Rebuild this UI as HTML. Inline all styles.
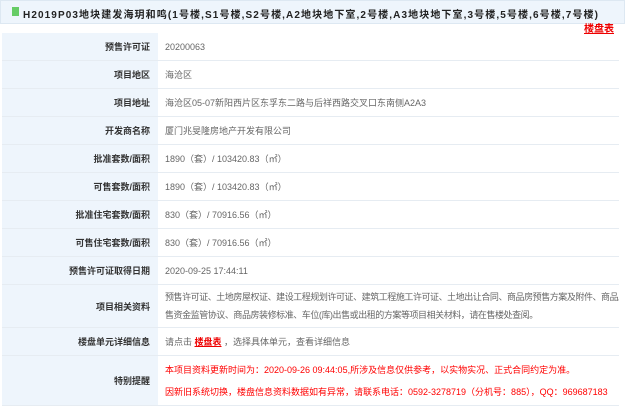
<!DOCTYPE html>
<html><head><meta charset="utf-8"><style>
body{margin:0;width:625px;height:406px;overflow:hidden;background:#fff;font-family:"Liberation Sans","Noto Sans CJK SC",sans-serif;}
.hd{position:absolute;left:0;top:0;width:623px;height:22px;background:#eef5fc;border:1px solid #dde8f2;}
.hd .t{position:absolute;left:22px;top:5px;font-size:10px;font-weight:bold;letter-spacing:1.1px;color:#222;white-space:nowrap;}
.hd .ic{position:absolute;left:11px;top:6px;width:7px;height:9px;background:#6c6;}
.lp{position:absolute;left:584px;top:20px;font-size:10px;font-weight:bold;color:#e00;text-decoration:underline;}
table{position:absolute;left:2px;top:33px;width:617px;border-collapse:collapse;font-size:9px;table-layout:fixed;}
td{border-bottom:1px solid #e6ecf2;height:27px;padding:0;overflow:hidden;}
td.l{width:148px;background:#eef5fc;text-align:right;padding-right:8px;font-weight:bold;color:#333;}
td.v{padding-left:7px;color:#666;line-height:18px;}
td.v.r{color:#f00;}
.nw{white-space:nowrap;letter-spacing:-0.45px;}
a{color:#e00;font-weight:bold;text-decoration:underline;}
</style></head><body>
<div class="hd"><div class="ic"></div><div class="t">H2019P03地块建发海玥和鸣(1号楼,S1号楼,S2号楼,A2地块地下室,2号楼,A3地块地下室,3号楼,5号楼,6号楼,7号楼)</div></div>
<div class="lp">楼盘表</div>
<table>
<tr><td class="l">预售许可证</td><td class="v">20200063</td></tr>
<tr><td class="l">项目地区</td><td class="v">海沧区</td></tr>
<tr><td class="l">项目地址</td><td class="v">海沧区05-07新阳西片区东孚东二路与后祥西路交叉口东南侧A2A3</td></tr>
<tr><td class="l">开发商名称</td><td class="v">厦门兆旻隆房地产开发有限公司</td></tr>
<tr><td class="l">批准套数/面积</td><td class="v">1890（套）/ 103420.83（㎡）</td></tr>
<tr><td class="l">可售套数/面积</td><td class="v">1890（套）/ 103420.83（㎡）</td></tr>
<tr><td class="l">批准住宅套数/面积</td><td class="v">830（套）/ 70916.56（㎡）</td></tr>
<tr><td class="l">可售住宅套数/面积</td><td class="v">830（套）/ 70916.56（㎡）</td></tr>
<tr><td class="l">预售许可证取得日期</td><td class="v">2020-09-25 17:44:11</td></tr>
<tr><td class="l" style="height:42px">项目相关资料</td><td class="v"><div class="nw">预售许可证、土地房屋权证、建设工程规划许可证、建筑工程施工许可证、土地出让合同、商品房预售方案及附件、商品房预</div><div class="nw">售资金监管协议、商品房装修标准、车位(库)出售或出租的方案等项目相关材料，请在售楼处查阅。</div></td></tr>
<tr><td class="l">楼盘单元详细信息</td><td class="v">请点击 <a>楼盘表</a> ，选择具体单元，查看详细信息</td></tr>
<tr><td class="l" style="height:49px">特别提醒</td><td class="v r" style="line-height:22px"><div class="nw" style="letter-spacing:0">本项目资料更新时间为：2020-09-26 09:44:05,所涉及信息仅供参考，以实物实况、正式合同约定为准。</div><div class="nw" style="letter-spacing:0">因新旧系统切换，楼盘信息资料数据如有异常，请联系电话：0592-3278719（分机号：885），QQ：969687183</div></td></tr>
</table>
</body></html>
